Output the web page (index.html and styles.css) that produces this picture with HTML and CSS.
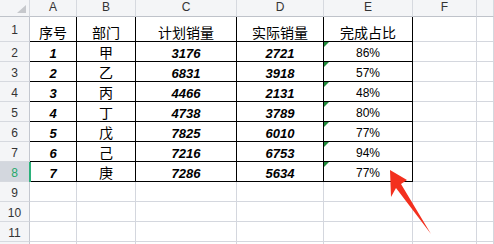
FILE: index.html
```html
<!DOCTYPE html>
<html lang="zh">
<head>
<meta charset="utf-8">
<title>Sheet</title>
<link rel="stylesheet" href="styles.css">
</head>
<body>
<div class="sheet">
  <div class="ch corner"><svg class="corner-tri" width="30" height="16" viewBox="0 0 30 16"><polygon points="26,5 26,13 17,13" fill="#c6c8cc"/></svg></div>
  <div class="ch">A</div><div class="ch">B</div><div class="ch">C</div><div class="ch">D</div><div class="ch">E</div><div class="ch">F</div><div class="ch"></div>

  <div class="rh r1n">1</div>
  <div class="c t h1">序号</div><div class="c t h1">部门</div><div class="c t h1">计划销量</div><div class="c t h1">实际销量</div><div class="c t h1">完成占比</div><div class="c"></div><div class="c"></div>

  <div class="rh">2</div>
  <div class="c t n">1</div><div class="c t cn">甲</div><div class="c t n">3176</div><div class="c t n">2721</div><div class="c t p">86%</div><div class="c"></div><div class="c"></div>

  <div class="rh">3</div>
  <div class="c t n">2</div><div class="c t cn">乙</div><div class="c t n">6831</div><div class="c t n">3918</div><div class="c t p">57%</div><div class="c"></div><div class="c"></div>

  <div class="rh">4</div>
  <div class="c t n">3</div><div class="c t cn">丙</div><div class="c t n">4466</div><div class="c t n">2131</div><div class="c t p">48%</div><div class="c"></div><div class="c"></div>

  <div class="rh">5</div>
  <div class="c t n">4</div><div class="c t cn">丁</div><div class="c t n">4738</div><div class="c t n">3789</div><div class="c t p">80%</div><div class="c"></div><div class="c"></div>

  <div class="rh">6</div>
  <div class="c t n">5</div><div class="c t cn">戊</div><div class="c t n">7825</div><div class="c t n">6010</div><div class="c t p">77%</div><div class="c"></div><div class="c"></div>

  <div class="rh">7</div>
  <div class="c t n">6</div><div class="c t cn">己</div><div class="c t n">7216</div><div class="c t n">6753</div><div class="c t p">94%</div><div class="c"></div><div class="c"></div>

  <div class="rh sel">8</div>
  <div class="c t n">7</div><div class="c t cn">庚</div><div class="c t n">7286</div><div class="c t n">5634</div><div class="c t p">77%</div><div class="c"></div><div class="c"></div>

  <div class="rh">9</div>
  <div class="c"></div><div class="c"></div><div class="c"></div><div class="c"></div><div class="c"></div><div class="c"></div><div class="c"></div>

  <div class="rh">10</div>
  <div class="c"></div><div class="c"></div><div class="c"></div><div class="c"></div><div class="c"></div><div class="c"></div><div class="c"></div>

  <div class="rh">11</div>
  <div class="c"></div><div class="c"></div><div class="c"></div><div class="c"></div><div class="c"></div><div class="c"></div><div class="c"></div>

  <div class="rh"></div>
  <div class="c"></div><div class="c"></div><div class="c"></div><div class="c"></div><div class="c"></div><div class="c"></div><div class="c"></div>
</div>
<svg class="arrow" width="494" height="244" viewBox="0 0 494 244">
  <polygon points="390,170 407,180 401,184 431,234 396,188 391,197" fill="#f3301e"/>
</svg>
</body>
</html>
```

FILE: styles.css
```css
html, body {
  margin: 0;
  padding: 0;
  background: #ffffff;
  overflow: hidden;
}

body {
  width: 494px;
  height: 244px;
  position: relative;
  font-family: "Liberation Sans", "Noto Sans CJK SC", sans-serif;
  color: #000000;
}

.sheet {
  display: grid;
  grid-template-columns: 30px 47px 59px 101px 87px 89px 64px 1fr;
  grid-template-rows: 17px 25px repeat(11, 20px);
  width: 494px;
  height: 244px;
  overflow: hidden;
}

.sheet > div {
  box-sizing: border-box;
  overflow: hidden;
  white-space: nowrap;
  text-align: center;
}

.ch {
  background: #f4f5f7;
  border-right: 1px solid #d6d9df;
  border-bottom: 1px solid #bfc3ca;
  color: #333333;
  font-size: 12px;
  line-height: 15px;
}

.corner {
  position: relative;
}

.corner-tri {
  display: block;
}

.rh {
  background: #f4f5f7;
  border-right: 1px solid #c3c7cf;
  border-bottom: 1px solid #d6d9df;
  color: #333333;
  font-size: 12px;
  line-height: 19px;
  padding-top: 2px;
}

.r1n {
  line-height: 24px;
  padding-top: 1px;
}

.rh.sel {
  position: relative;
  background: #d3d7de;
  color: #27a86a;
  overflow: visible;
}

.rh.sel::after {
  content: "";
  position: absolute;
  right: -2px;
  top: 0;
  width: 2px;
  height: 20px;
  background: #2bb07a;
}

.c {
  border-right: 1px solid #d4d7de;
  border-bottom: 1px solid #d4d7de;
  line-height: 19px;
  padding-top: 2px;
}

.c.t {
  border-right-color: #000000;
  border-bottom-color: #000000;
}

.h1 {
  font-size: 14px;
  line-height: 20px;
  padding-top: 6px;
}

.n {
  font-size: 13px;
  font-weight: bold;
  font-style: italic;
}

.cn {
  font-size: 14px;
}

.p {
  font-size: 12px;
  position: relative;
}

.p::before {
  content: "";
  position: absolute;
  left: 0;
  top: 0;
  width: 5px;
  height: 5px;
  background: #1f8a3a;
  clip-path: polygon(0 0, 100% 0, 0 100%);
}

.arrow {
  position: absolute;
  left: 0;
  top: 0;
  pointer-events: none;
}
```
